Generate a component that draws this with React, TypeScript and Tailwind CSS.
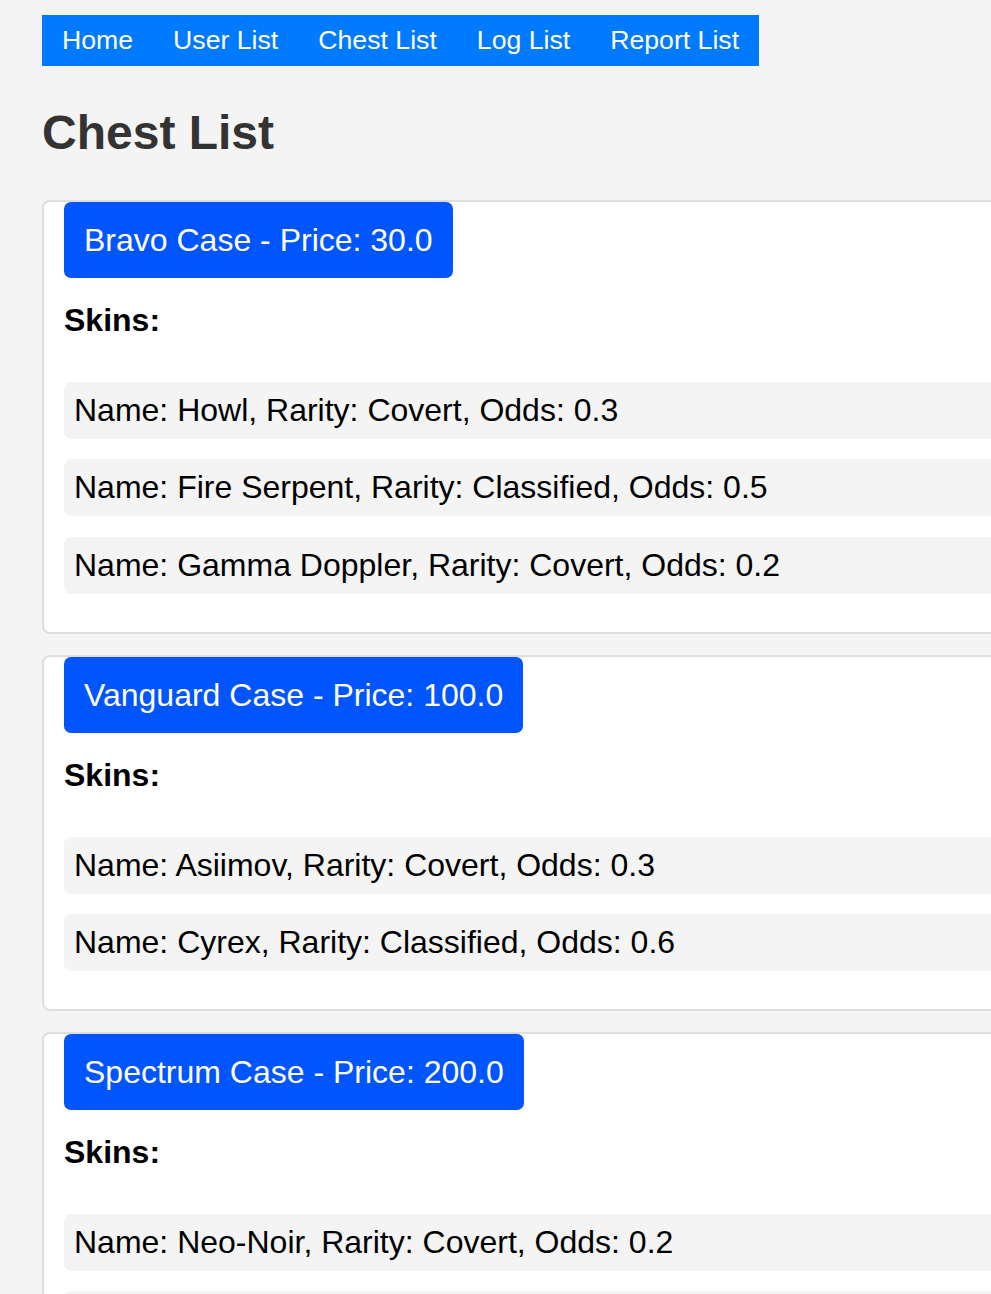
import React from "react";

const chests = [
  {
    name: "Bravo Case",
    price: "30.0",
    skins: [
      { name: "Howl", rarity: "Covert", odds: "0.3" },
      { name: "Fire Serpent", rarity: "Classified", odds: "0.5" },
      { name: "Gamma Doppler", rarity: "Covert", odds: "0.2" },
    ],
  },
  {
    name: "Vanguard Case",
    price: "100.0",
    skins: [
      { name: "Asiimov", rarity: "Covert", odds: "0.3" },
      { name: "Cyrex", rarity: "Classified", odds: "0.6" },
    ],
  },
  {
    name: "Spectrum Case",
    price: "200.0",
    skins: [
      { name: "Neo-Noir", rarity: "Covert", odds: "0.2" },
      { name: "Bloodsport", rarity: "Classified", odds: "0.8" },
    ],
  },
];

const links = ["Home", "User List", "Chest List", "Log List", "Report List"];

export default function App() {
  return (
    <div className="h-screen w-full overflow-hidden bg-[#f4f4f4] pt-[15px] pl-[42px] font-['Liberation_Sans',Arial,sans-serif]">
      {/* Nav */}
      <nav className="flex w-max bg-[#007bff]">
        {links.map((l) => (
          <a
            key={l}
            href="#"
            className="h-[51px] px-[20px] text-[26.67px] leading-[51px] text-white"
          >
            {l}
          </a>
        ))}
      </nav>

      <h1 className="mt-[39px] text-[48px] font-bold leading-[55px] text-[#333]">
        Chest List
      </h1>

      {/* Chests */}
      <div className="mt-[40px] flex flex-col gap-[21px]">
        {chests.map((c) => (
          <div
            key={c.name}
            className="w-[1150px] shrink-0 rounded-[8px] border-2 border-[#dedede] bg-white px-[20px] pb-[38px]"
          >
            <div className="inline-block h-[76px] rounded-[7px] bg-[#0055ff] px-[20px] text-[32px] leading-[76px] text-white">
              {c.name} - Price: {c.price}
            </div>
            <h3 className="mt-[24px] text-[32px] font-bold leading-[37px] text-black">
              Skins:
            </h3>
            <ul className="mt-[43px] flex flex-col gap-[20.3px]">
              {c.skins.map((s) => (
                <li
                  key={s.name}
                  className="h-[57px] rounded-[7px] bg-[#f4f4f4] px-[10px] text-[32px] leading-[57px] text-black"
                >
                  Name: {s.name}, Rarity: {s.rarity}, Odds: {s.odds}
                </li>
              ))}
            </ul>
          </div>
        ))}
      </div>
    </div>
  );
}
